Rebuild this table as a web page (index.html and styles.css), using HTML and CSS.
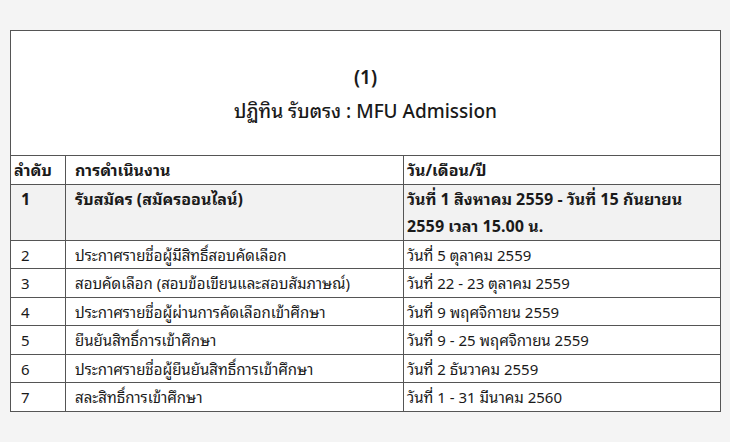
FILE: index.html
```html
<!DOCTYPE html>
<html lang="th">
<head>
<meta charset="utf-8">
<link rel="stylesheet" href="styles.css">
</head>
<body>
<div class="page">
  <table class="cal">
    <colgroup>
      <col class="w1">
      <col class="w2">
      <col class="w3">
    </colgroup>
    <thead>
      <tr class="title-row">
        <th colspan="3" class="title">
          <div class="t1">(1)</div>
          <div class="t2">ปฏิทิน รับตรง : MFU Admission</div>
        </th>
      </tr>
      <tr class="head-row">
        <th class="c1 hd">ลำดับ</th>
        <th class="c2">การดำเนินงาน</th>
        <th class="c3">วัน/เดือน/ปี</th>
      </tr>
    </thead>
    <tbody>
      <tr class="hl">
        <td class="c1">1</td>
        <td class="c2">รับสมัคร (สมัครออนไลน์)</td>
        <td class="c3">วันที่ 1 สิงหาคม 2559 - วันที่ 15 กันยายน 2559 เวลา 15.00 น.</td>
      </tr>
      <tr>
        <td class="c1">2</td>
        <td class="c2">ประกาศรายชื่อผู้มีสิทธิ์สอบคัดเลือก</td>
        <td class="c3">วันที่ 5 ตุลาคม 2559</td>
      </tr>
      <tr>
        <td class="c1">3</td>
        <td class="c2">สอบคัดเลือก (สอบข้อเขียนและสอบสัมภาษณ์)</td>
        <td class="c3">วันที่ 22 - 23 ตุลาคม 2559</td>
      </tr>
      <tr>
        <td class="c1">4</td>
        <td class="c2">ประกาศรายชื่อผู้ผ่านการคัดเลือกเข้าศึกษา</td>
        <td class="c3">วันที่ 9 พฤศจิกายน 2559</td>
      </tr>
      <tr>
        <td class="c1">5</td>
        <td class="c2">ยืนยันสิทธิ์การเข้าศึกษา</td>
        <td class="c3">วันที่ 9 - 25 พฤศจิกายน 2559</td>
      </tr>
      <tr>
        <td class="c1">6</td>
        <td class="c2">ประกาศรายชื่อผู้ยืนยันสิทธิ์การเข้าศึกษา</td>
        <td class="c3">วันที่ 2 ธันวาคม 2559</td>
      </tr>
      <tr>
        <td class="c1">7</td>
        <td class="c2">สละสิทธิ์การเข้าศึกษา</td>
        <td class="c3">วันที่ 1 - 31 มีนาคม 2560</td>
      </tr>
    </tbody>
  </table>
</div>
</body>
</html>
```

FILE: styles.css
```css
html, body {
  margin: 0;
  padding: 0;
  background: #f4f4f4;
}
body {
  font-family: "Noto Sans Thai Looped", "Noto Sans Thai", "Noto Sans", sans-serif;
  color: #1a1a1a;
}
.page {
  padding: 30px 10px 0 10px;
}
.cal {
  width: 710px;
  border-collapse: collapse;
  background: #fff;
  border: 1px solid #444;
  table-layout: fixed;
}
.w1 { width: 55px; }
.w2 { width: 338px; }
.w3 { width: 317px; }
.cal th, .cal td {
  border: 1px solid #555;
  text-align: left;
  vertical-align: top;
  font-size: 15px;
  line-height: 27.5px;
  padding: 0 4px;
  white-space: nowrap;
  overflow: hidden;
}
.cal th {
  font-weight: 700;
  font-size: 16px;
}
.title-row .title {
  height: 124px;
  text-align: center;
  vertical-align: middle;
  padding: 0;
  font-size: 19px;
}
.t1 {
  font-weight: 600;
  line-height: 34px;
}
.t2 {
  font-weight: 500;
  line-height: 34px;
}
.cal th.hd { padding-left: 3px; }
.cal td.c1 { padding-left: 10px; }
.cal .c2 { padding-left: 9px; }
.cal .c3 { padding-left: 3px; }
.cal .hl td {
  background: #f2f2f2;
  font-weight: 700;
  font-size: 16px;
}
.cal .hl td.c3 {
  white-space: normal;
  padding-right: 14px;
}
```
